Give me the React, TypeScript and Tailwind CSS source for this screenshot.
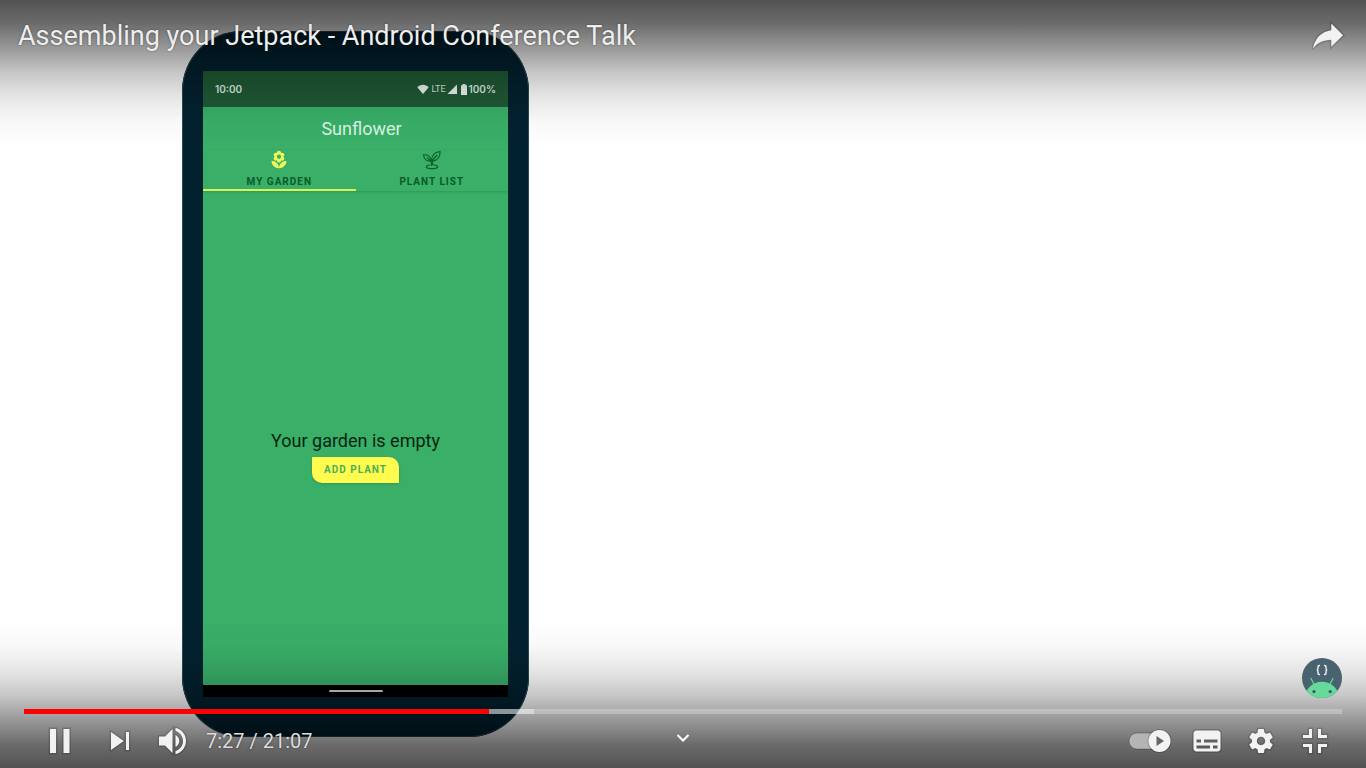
import { useState } from "react";
import type { ReactNode } from "react";

const DURATION = 1267;
const BUFFERED = 490;

function formatTime(seconds: number) {
  const m = Math.floor(seconds / 60);
  const s = seconds % 60;
  return `${m}:${String(s).padStart(2, "0")}`;
}

function PlayerIcon({ d }: { d: string }) {
  return (
    <svg viewBox="0 0 36 36" className="h-[54px] w-[54px]" aria-hidden="true">
      <path d={d} fill="none" stroke="#000" strokeOpacity="0.15" strokeWidth="2" />
      <path d={d} fill="#f2f2f2" fillRule="evenodd" />
    </svg>
  );
}

function PlayerButton({ label, d }: { label: string; d: string }) {
  return (
    <button type="button" aria-label={label} className="block cursor-pointer">
      <PlayerIcon d={d} />
    </button>
  );
}

const PAUSE = "M12,26 16,26 16,10 12,10 z M21,26 25,26 25,10 21,10 z";
const NEXT = "M12,24 20.5,18 12,12 V24 z M22,12 v12 h2 V12 h-2 z";
const VOLUME =
  "M8,21 L12,21 L17,26 L17,10 L12,15 L8,15 L8,21 Z M19,14 L19,22 C20.48,21.32 21.5,19.77 21.5,18 C21.5,16.26 20.48,14.74 19,14 Z M19,11.29 C21.89,12.15 24,14.83 24,18 C24,21.17 21.89,23.85 19,24.71 L19,26.77 C23.01,25.86 26,22.28 26,18 C26,13.72 23.01,10.14 19,9.23 L19,11.29 Z";
const SUBTITLES =
  "M11,11 C9.89,11 9,11.9 9,13 L9,23 C9,24.1 9.89,25 11,25 L25,25 C26.1,25 27,24.1 27,23 L27,13 C27,11.9 26.1,11 25,11 L11,11 Z M11,17 L14,17 L14,19 L11,19 L11,17 Z M20,23 L11,23 L11,21 L20,21 L20,23 Z M25,23 L22,23 L22,21 L25,21 L25,23 Z M25,19 L16,19 L16,17 L25,17 L25,19 Z";
const SETTINGS =
  "m 23.94,18.78 c .03,-0.25 .05,-0.51 .05,-0.78 0,-0.27 -0.02,-0.52 -0.05,-0.78 l 1.68,-1.32 c .15,-0.12 .19,-0.33 .09,-0.51 l -1.6,-2.76 c -0.09,-0.17 -0.31,-0.24 -0.48,-0.17 l -1.99,.8 c -0.41,-0.32 -0.86,-0.58 -1.35,-0.78 l -0.30,-2.12 c -0.02,-0.19 -0.19,-0.33 -0.39,-0.33 l -3.2,0 c -0.2,0 -0.36,.14 -0.39,.33 l -0.30,2.12 c -0.48,.2 -0.93,.47 -1.35,.78 l -1.99,-0.8 c -0.18,-0.07 -0.39,0 -0.48,.17 l -1.6,2.76 c -0.10,.17 -0.05,.39 .09,.51 l 1.68,1.32 c -0.03,.25 -0.05,.52 -0.05,.78 0,.26 .02,.52 .05,.78 l -1.68,1.32 c -0.15,.12 -0.19,.33 -0.09,.51 l 1.6,2.76 c .09,.17 .31,.24 .48,.17 l 1.99,-0.8 c .41,.32 .86,.58 1.35,.78 l .30,2.12 c .02,.19 .19,.33 .39,.33 l 3.2,0 c .2,0 .36,-0.14 .39,-0.33 l .30,-2.12 c .48,-0.2 .93,-0.47 1.35,-0.78 l 1.99,.8 c .18,.07 .39,0 .48,-0.17 l 1.6,-2.76 c .09,-0.17 .05,-0.39 -0.09,-0.51 l -1.68,-1.32 0,0 z m -5.94,2.01 c -1.54,0 -2.8,-1.25 -2.8,-2.8 0,-1.54 1.25,-2.8 2.8,-2.8 1.54,0 2.8,1.25 2.8,2.8 0,1.54 -1.25,2.8 -2.8,2.8 l 0,0 z";
const EXIT_FULLSCREEN =
  "m14,14 -4,0 0,2 6,0 0,-6 -2,0 z M22,14 l0,-4 -2,0 0,6 6,0 0,-2 z M20,26 l2,0 0,-4 4,0 0,-2 -6,0 z M10,22 l4,0 0,4 2,0 0,-6 -6,0 z";
const SHARE =
  "m20.20,14.19 0,-4.45 7.79,7.79 -7.79,7.56 0,-4.56 C16.27,20.69 12.10,21.81 9.34,24.76 8.80,25.13 7.60,27.29 8.12,25.65 9.08,21.32 11.80,17.18 15.98,15.38 c1.33,-0.60 2.76,-0.98 4.21,-1.19 z";

function PhoneTab({ label, active, icon }: { label: string; active?: boolean; icon: ReactNode }) {
  return (
    <button
      type="button"
      role="tab"
      aria-selected={!!active}
      className={
        active
          ? "flex flex-1 flex-col items-center border-b-2 border-[#d3f35c]"
          : "flex flex-1 flex-col items-center border-b-2 border-transparent"
      }
    >
      {icon}
      <span className="mt-1 text-[10px] leading-[15px] font-bold tracking-widest text-[#0a5a2a]">{label}</span>
    </button>
  );
}

function Phone() {
  return (
    <section
      aria-label="Sunflower app"
      className="ml-[182px] flex h-full w-[347px] flex-col rounded-[60px] bg-[#02212f] px-[21px] py-10 inset-ring inset-ring-[#2c4a54]"
    >
      <div className="flex min-h-0 flex-1 flex-col bg-[#39af68]">
        <div className="flex h-9 shrink-0 items-center justify-between bg-[#1f5a35] px-3 font-[Inter,sans-serif] text-[10px] font-semibold text-[#dcebe0]">
          <span>10:00</span>
          <span className="flex items-center">
            <svg viewBox="0 0 12 10" className="h-[10px] w-3" aria-hidden="true">
              <path d="M6,10 L0.3,3.2 C3,-0.2 9,-0.2 11.7,3.2 Z" fill="#eef5ef" />
            </svg>
            <span className="ml-[2px] font-[Roboto,sans-serif] text-[9px] leading-[10px] font-normal">LTE</span>
            <svg viewBox="0 0 10 10" className="ml-px h-[10px] w-[10px]" aria-hidden="true">
              <path d="M10,0.5 V10 H0.5 Z" fill="#eef5ef" />
            </svg>
            <svg viewBox="0 0 8 11" className="ml-[3px] h-[11px] w-2" aria-hidden="true">
              <path d="M2.5,0 h3 v1.2 H7 V11 H1 V1.2 h1.5 z" fill="#eef5ef" />
            </svg>
            <span className="ml-px">100%</span>
          </span>
        </div>
        <h2 className="pt-2 pl-3 text-center text-[18px] leading-7 text-[#d9f5e2]">Sunflower</h2>
        <div role="tablist" className="mt-[7px] flex shadow-sm">
          <PhoneTab
            label="MY GARDEN"
            active
            icon={
              <svg viewBox="0 0 24 24" className="h-5 w-5" aria-hidden="true">
                <path
                  fill="#eff957"
                  d="M12 22c4.97 0 9-4.03 9-9-4.97 0-9 4.03-9 9zM5.6 10.25c0 1.38 1.12 2.5 2.5 2.5.53 0 1.01-.16 1.42-.44l-.02.19c0 1.38 1.12 2.5 2.5 2.5s2.5-1.12 2.5-2.5l-.02-.19c.4.28.89.44 1.42.44 1.38 0 2.5-1.12 2.5-2.5 0-1-.59-1.85-1.43-2.25.84-.4 1.43-1.25 1.43-2.25 0-1.38-1.12-2.5-2.5-2.5-.53 0-1.01.16-1.42.44l.02-.19C14.5 2.12 13.38 1 12 1S9.5 2.12 9.5 3.5l.02.19c-.4-.28-.89-.44-1.42-.44-1.38 0-2.5 1.12-2.5 2.5 0 1 .59 1.85 1.43 2.25-.84.4-1.43 1.25-1.43 2.25zM12 5.5c1.38 0 2.5 1.12 2.5 2.5s-1.12 2.5-2.5 2.5S9.5 9.38 9.5 8s1.12-2.5 2.5-2.5zM3 13c0 4.97 4.03 9 9 9 0-4.97-4.03-9-9-9z"
                />
              </svg>
            }
          />
          <PhoneTab
            label="PLANT LIST"
            icon={
              <svg viewBox="0 0 20 20" className="h-5 w-5" fill="none" stroke="#0a602d" strokeWidth="1.2" aria-hidden="true">
                <path d="M9.5,11.5 C9.5,4.5 13,2 18,1.5 C18.5,6.5 15.5,10.5 9.5,11.5 L15,5" />
                <path d="M9,11 C9,6.5 6,4.5 1.5,4.8 C2,9.5 5,11.5 9,11 L5,7.5" />
                <path d="M9.5,11 V16 M8,15 C2.5,15.3 3,18.7 10,18.7 C17,18.7 17.500,15.3 12,15 C10.5,15 10.3,14 10.3,12" />
              </svg>
            }
          />
        </div>
        <div className="flex flex-1 flex-col items-center justify-center pt-9">
          <p className="text-[18px] leading-6 text-[#06240f]">Your garden is empty</p>
          <button
            type="button"
            className="mt-1 rounded-tr-[10px] rounded-bl-[10px] bg-[#fffb4f] px-3 text-[10px] leading-[26px] font-bold tracking-widest text-[#4cb056] shadow-sm"
          >
            ADD PLANT
          </button>
        </div>
        <div className="flex h-3 shrink-0 items-center justify-center bg-black">
          <span className="h-[2px] w-[54px] rounded-full bg-[#d0d0d0]" />
        </div>
      </div>
    </section>
  );
}

function ChannelMark() {
  return (
    <svg viewBox="0 0 40 40" className="h-10 w-10" aria-hidden="true">
      <defs>
        <clipPath id="mark-circle">
          <circle cx="20" cy="20" r="20" />
        </clipPath>
      </defs>
      <g clipPath="url(#mark-circle)">
        <rect width="40" height="40" fill="#48626f" />
        <ellipse cx="20" cy="40" rx="17" ry="16.3" fill="#67d99a" />
        <path d="M9,20.5 L12,26 M31,20.5 L28,26" stroke="#67d99a" strokeWidth="1.3" strokeLinecap="round" />
        <circle cx="12" cy="33.6" r="1.6" fill="#3f5560" />
        <circle cx="28.2" cy="33.6" r="1.6" fill="#3f5560" />
        <path
          d="M18,7.5 h-0.8 q-1.2,0 -1.2,1.2 v1.6 q0,1.7 -1.3,1.7 q1.3,0 1.3,1.7 v1.6 q0,1.2 1.2,1.2 h0.8 M22,7.5 h0.8 q1.2,0 1.2,1.2 v1.6 q0,1.7 1.3,1.7 q-1.3,0 -1.3,1.7 v1.6 q0,1.2 -1.2,1.2 h-0.8"
          fill="none"
          stroke="#e6edf0"
          strokeWidth="1.5"
        />
      </g>
    </svg>
  );
}

export default function App() {
  const [time, setTime] = useState(447);
  const [autoplay, setAutoplay] = useState(true);
  const played = (time / DURATION) * 100;
  const buffered = (BUFFERED / DURATION) * 100;

  return (
    <main className="grid h-screen overflow-hidden bg-white font-[Roboto,sans-serif]">
      <div className="col-start-1 row-start-1 min-h-0 py-[31px]">
        <Phone />
      </div>

      <div className="z-10 col-start-1 row-start-1 flex min-h-0 flex-col justify-between">
        <header className="flex h-[146px] items-start justify-between bg-[linear-gradient(to_bottom,rgba(0,0,0,0.68)_0%,rgba(0,0,0,0.58)_16%,rgba(0,0,0,0.41)_32%,rgba(0,0,0,0.22)_50%,rgba(0,0,0,0.1)_66%,rgba(0,0,0,0.03)_82%,transparent_100%)] pt-[9px] pr-[11px] pl-[18px]">
          <h1 className="text-[27px] leading-[54px] text-[#eee] [text-shadow:0_0_2px_rgba(0,0,0,0.5)]">
            Assembling your Jetpack - Android Conference Talk
          </h1>
          <PlayerButton label="Share" d={SHARE} />
        </header>

        <footer className="flex h-[146px] flex-col justify-end bg-[linear-gradient(to_top,rgba(0,0,0,0.68)_0%,rgba(0,0,0,0.58)_16%,rgba(0,0,0,0.41)_32%,rgba(0,0,0,0.22)_50%,rgba(0,0,0,0.1)_66%,rgba(0,0,0,0.03)_82%,transparent_100%)] px-6">
          <a href="#channel" aria-label="Channel" className="mb-[11px] block self-end">
            <ChannelMark />
          </a>
          <input
            type="range"
            aria-label="Seek"
            min={0}
            max={DURATION}
            value={time}
            onChange={(e) => setTime(Number(e.target.value))}
            className="block h-[5px] w-full cursor-pointer appearance-none [&::-webkit-slider-thumb]:h-0 [&::-webkit-slider-thumb]:w-0 [&::-webkit-slider-thumb]:appearance-none"
            style={{
              background: `linear-gradient(to right, #f00 ${played}%, rgba(255,255,255,0.55) ${played}% ${buffered}%, rgba(255,255,255,0.25) ${buffered}%)`,
            }}
          />
          <div className="grid grid-cols-[1fr_auto_1fr] items-center">
            <div className="flex items-center pl-2">
              <span className="mr-[7px]">
                <PlayerButton label="Pause" d={PAUSE} />
              </span>
              <PlayerButton label="Next" d={NEXT} />
              <PlayerButton label="Mute" d={VOLUME} />
              <span className="ml-[5px] text-[20px] text-[#ddd] [text-shadow:0_0_2px_rgba(0,0,0,0.5)]">
                {formatTime(time)} / {formatTime(DURATION)}
              </span>
            </div>
            <button type="button" aria-label="More videos" className="mb-[6px] cursor-pointer">
              <svg viewBox="0 0 14 10" className="h-[10px] w-[14px]" aria-hidden="true">
                <path d="M1.5,2 L7,7.5 L12.5,2" fill="none" stroke="#fff" strokeWidth="2" />
              </svg>
            </button>
            <div className="flex items-center justify-end">
              <label className="mr-2 block cursor-pointer">
                <input
                  type="checkbox"
                  aria-label="Autoplay"
                  className="sr-only"
                  checked={autoplay}
                  onChange={(e) => setAutoplay(e.target.checked)}
                />
                <svg viewBox="0 0 44 26" className="h-[26px] w-11" aria-hidden="true">
                  <rect x="1" y="5" width="38" height="16" rx="8" fill="#b4b4b4" stroke="#000" strokeOpacity="0.25" />
                  <circle cx={autoplay ? 31.5 : 12.5} cy="13" r="12" fill="#000" fillOpacity="0.2" />
                  <circle cx={autoplay ? 31.5 : 12.5} cy="13" r="11" fill="#f2f2f2" />
                  {autoplay ? (
                    <path d="M28.5,8 L36,13 L28.5,18 Z" fill="#666" />
                  ) : (
                    <path d="M9,9 h3 v8 h-3 z M14,9 h3 v8 h-3 z" fill="#666" />
                  )}
                </svg>
              </label>
              <PlayerButton label="Subtitles" d={SUBTITLES} />
              <PlayerButton label="Settings" d={SETTINGS} />
              <PlayerButton label="Exit full screen" d={EXIT_FULLSCREEN} />
            </div>
          </div>
        </footer>
      </div>
    </main>
  );
}
